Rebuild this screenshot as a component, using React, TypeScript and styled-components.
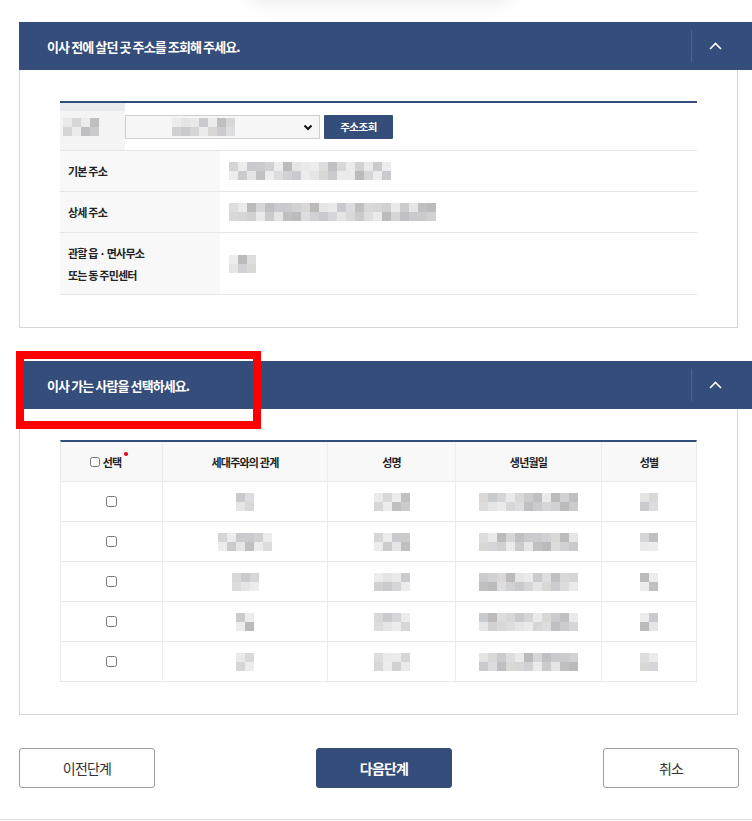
import React from "react";
import styled, { createGlobalStyle } from "styled-components";

const NAVY = "#344d7a";

const GlobalStyle = createGlobalStyle`
  html, body {
    margin: 0;
    padding: 0;
    background: #ffffff;
    overflow: hidden;
  }
  body {
    font-family: "Noto Sans CJK KR", "Noto Sans", sans-serif;
    color: #333333;
  }
  * { box-sizing: border-box; }
`;

const Page = styled.div`
  position: relative;
  width: 752px;
  height: 821px;
  overflow: hidden;
  display: flex;
  flex-direction: column;
`;

const TopShadow = styled.div`
  width: 260px;
  height: 30px;
  margin: -30px 0 22px 250px;
  border-radius: 20px;
  background: #ffffff;
  box-shadow: 0 4px 16px rgba(40, 50, 80, 0.09);
`;

const Panel = styled.section<{ $gap?: number }>`
  width: 719px;
  margin-left: 19px;
  margin-top: ${(p) => p.$gap ?? 0}px;
`;

const PanelHeader = styled.div`
  display: flex;
  align-items: center;
  height: 48px;
  width: calc(100% + 20px);
  padding: 0 20px 0 28px;
  background: ${NAVY};
`;

const PanelTitle = styled.h2`
  margin: 0;
  color: #ffffff;
  font-size: 13px;
  font-weight: 700;
  letter-spacing: -0.9px;
`;

const Toggle = styled.button`
  margin-left: auto;
  width: 47px;
  height: 32px;
  padding: 0;
  border: 0;
  border-left: 1px solid rgba(255, 255, 255, 0.13);
  background: transparent;
  display: flex;
  align-items: center;
  justify-content: center;
  cursor: pointer;
`;

const PanelBody = styled.div`
  border: 1px solid #d6d6d6;
  border-top: 0;
  padding: 31px 40px 32px;
`;

/* pixelated placeholder for masked personal data */
const GRAYS = ["#c9c9cc", "#d4d4d6", "#dcdcde", "#e4e4e5", "#cfcfd2", "#bdbdc0", "#e9e9ea", "#d8d6d4", "#c6c8cc", "#b9b7b8"];

function mosaic(cols: number, seed: number, dark: number) {
  const row = (r: number) => {
    const stops: string[] = [];
    for (let i = 0; i < cols; i++) {
      const k = (seed * 7 + i * 13 + r * 5 + ((i * i + seed) % 3)) % GRAYS.length;
      let c = GRAYS[k];
      if ((i + r + seed) % 4 === 0 && dark < 1) c = "#ececed";
      stops.push(`${c} ${i * 9}px ${(i + 1) * 9}px`);
    }
    return `linear-gradient(90deg, ${stops.join(", ")})`;
  };
  return `${row(0)} top left / 100% 50% no-repeat, ${row(1)} bottom left / 100% 50% no-repeat`;
}

const Masked = styled.span<{ $cols: number; $seed: number; $dark?: number }>`
  display: inline-block;
  width: ${(p) => p.$cols * 9}px;
  height: 18px;
  background: ${(p) => mosaic(p.$cols, p.$seed, p.$dark ?? 0)};
  filter: blur(0.35px);
  opacity: 0.95;
`;

const Haze = styled.span<{ $w: number }>`
  display: inline-flex;
  align-items: center;
  width: ${(p) => p.$w}px;
  align-self: stretch;
  padding-left: 3px;
  background: linear-gradient(#e7eaee 0 8px, #f4f4f4 8px 100%);
`;

/* address table */
const AddrTable = styled.div`
  border-top: 2px solid ${NAVY};
`;

const SearchRow = styled.div`
  display: flex;
  align-items: center;
  height: 48px;
  border-bottom: 1px solid #e6e6e6;
`;

const Select = styled.div`
  position: relative;
  display: flex;
  align-items: center;
  width: 195px;
  height: 24px;
  border: 1px solid #cfcfcf;
  background: #f6f6f6;
  padding-left: 46px;
`;

const SelectArrow = styled.svg`
  position: absolute;
  right: 6px;
  top: 8px;
`;

const SearchButton = styled.button`
  margin-left: 4px;
  width: 69px;
  height: 24px;
  border: 0;
  border-radius: 1px;
  background: ${NAVY};
  color: #ffffff;
  font-family: inherit;
  font-size: 10.5px;
  font-weight: 700;
  letter-spacing: -0.5px;
  padding: 0;
`;

const InfoRow = styled.div<{ $h: number }>`
  display: flex;
  height: ${(p) => p.$h}px;
  border-bottom: 1px solid #e6e6e6;
`;

const InfoLabel = styled.div`
  width: 160px;
  display: flex;
  flex-direction: column;
  justify-content: center;
  padding-left: 8px;
  background: #f8f8f8;
  font-size: 11px;
  font-weight: 700;
  letter-spacing: -0.8px;
  line-height: 22px;
  color: #222222;
`;

const InfoValue = styled.div`
  display: flex;
  align-items: center;
  padding-left: 9px;
`;

/* people table */
const Grid = styled.div`
  display: grid;
  grid-template-columns: 102px 165px 128px 146px 1fr;
  border-top: 2px solid ${NAVY};
  border-left: 1px solid #e8e8e8;
  border-right: 1px solid #e8e8e8;
`;

const Cell = styled.div<{ $head?: boolean; $shift?: number }>`
  height: 40px;
  display: flex;
  align-items: center;
  justify-content: center;
  padding-right: ${(p) => p.$shift ?? 0}px;
  border-bottom: 1px solid #e8e8e8;
  border-right: 1px solid #ececec;
  background: ${(p) => (p.$head ? "#f8f8f8" : "#ffffff")};
  font-size: 11px;
  font-weight: 700;
  letter-spacing: -0.8px;
  color: #222222;
  &:nth-child(5n) {
    border-right: 0;
  }
`;

const Check = styled.input.attrs({ type: "checkbox" })`
  width: 11px;
  height: 11px;
  margin: 0;
  accent-color: ${NAVY};
`;

const HeadCheck = styled(Check)`
  width: 10px;
  height: 10px;
  margin: 1px 3px 0 0;
`;

const Required = styled.span`
  position: relative;
  &::after {
    content: "";
    position: absolute;
    right: -7px;
    top: -2px;
    width: 4px;
    height: 4px;
    border-radius: 50%;
    background: #e60012;
  }
`;

/* footer */
const Actions = styled.div`
  display: grid;
  grid-template-columns: 136px 1fr 136px;
  width: 720px;
  margin: 33px 0 0 19px;
`;

const ActionButton = styled.button<{ $primary?: boolean }>`
  width: 136px;
  height: 40px;
  border-radius: 3px;
  border: 1px solid ${(p) => (p.$primary ? NAVY : "#9c9c9c")};
  background: ${(p) => (p.$primary ? NAVY : "#ffffff")};
  color: ${(p) => (p.$primary ? "#ffffff" : "#333333")};
  font-family: inherit;
  font-size: 14px;
  font-weight: ${(p) => (p.$primary ? 700 : 400)};
  letter-spacing: -0.8px;
  padding: 0;
`;

const NextButton = styled(ActionButton)`
  justify-self: center;
  margin-left: 10px;
`;

const BottomRule = styled.div`
  margin-top: 31px;
  border-top: 1px solid #dddddd;
`;

const Highlight = styled.div`
  position: absolute;
  left: 16px;
  top: 351px;
  width: 245px;
  height: 78px;
  border: 8px solid #ff0000;
  pointer-events: none;
`;

const Chevron = () => (
  <svg width="13" height="8" viewBox="0 0 13 8">
    <path d="M1 7 L6.5 1.5 L12 7" fill="none" stroke="#ffffff" strokeWidth="1.6" />
  </svg>
);

const people = [
  { rel: 2, relSeed: 1, name: 4, date: 11, sex: 2 },
  { rel: 6, relSeed: 3, name: 4, date: 11, sex: 2 },
  { rel: 3, relSeed: 5, name: 4, date: 11, sex: 2 },
  { rel: 2, relSeed: 7, name: 4, date: 11, sex: 2 },
  { rel: 2, relSeed: 2, name: 4, date: 11, sex: 2 },
];

export default function App() {
  return (
    <>
      <GlobalStyle />
      <Page>
        <TopShadow />

        <Panel>
          <PanelHeader>
            <PanelTitle>이사 전에 살던 곳 주소를 조회해 주세요.</PanelTitle>
            <Toggle aria-label="접기">
              <Chevron />
            </Toggle>
          </PanelHeader>
          <PanelBody>
            <AddrTable>
              <SearchRow>
                <Haze $w={65}>
                  <Masked $cols={4} $seed={2} />
                </Haze>
                <Select>
                  <Masked $cols={7} $seed={4} />
                  <SelectArrow width="10" height="7" viewBox="0 0 10 7">
                    <path d="M1.5 1.5 L5 5 L8.5 1.5" fill="none" stroke="#111" strokeWidth="2" />
                  </SelectArrow>
                </Select>
                <SearchButton>주소조회</SearchButton>
              </SearchRow>
              <InfoRow $h={41}>
                <InfoLabel>기본 주소</InfoLabel>
                <InfoValue>
                  <Masked $cols={18} $seed={3} />
                </InfoValue>
              </InfoRow>
              <InfoRow $h={41}>
                <InfoLabel>상세 주소</InfoLabel>
                <InfoValue>
                  <Masked $cols={23} $seed={6} $dark={1} />
                </InfoValue>
              </InfoRow>
              <InfoRow $h={62}>
                <InfoLabel>
                  <span>관할 읍 · 면사무소</span>
                  <span>또는 동 주민센터</span>
                </InfoLabel>
                <InfoValue>
                  <Masked $cols={3} $seed={8} />
                </InfoValue>
              </InfoRow>
            </AddrTable>
          </PanelBody>
        </Panel>

        <Panel $gap={33}>
          <PanelHeader>
            <PanelTitle>이사 가는 사람을 선택하세요.</PanelTitle>
            <Toggle aria-label="접기">
              <Chevron />
            </Toggle>
          </PanelHeader>
          <PanelBody>
            <Grid>
              <Cell $head $shift={12}>
                <HeadCheck />
                <Required>선택</Required>
              </Cell>
              <Cell $head>세대주와의 관계</Cell>
              <Cell $head>성명</Cell>
              <Cell $head>생년월일</Cell>
              <Cell $head>성별</Cell>
              {people.map((p, i) => (
                <React.Fragment key={i}>
                  <Cell>
                    <Check />
                  </Cell>
                  <Cell>
                    <Masked $cols={p.rel} $seed={p.relSeed} />
                  </Cell>
                  <Cell>
                    <Masked $cols={p.name} $seed={i + 2} />
                  </Cell>
                  <Cell>
                    <Masked $cols={p.date} $seed={i + 5} $dark={1} />
                  </Cell>
                  <Cell>
                    <Masked $cols={p.sex} $seed={i + 9} />
                  </Cell>
                </React.Fragment>
              ))}
            </Grid>
          </PanelBody>
        </Panel>

        <Actions>
          <ActionButton>이전단계</ActionButton>
          <NextButton $primary>다음단계</NextButton>
          <ActionButton>취소</ActionButton>
        </Actions>
        <BottomRule />

        <Highlight />
      </Page>
    </>
  );
}
